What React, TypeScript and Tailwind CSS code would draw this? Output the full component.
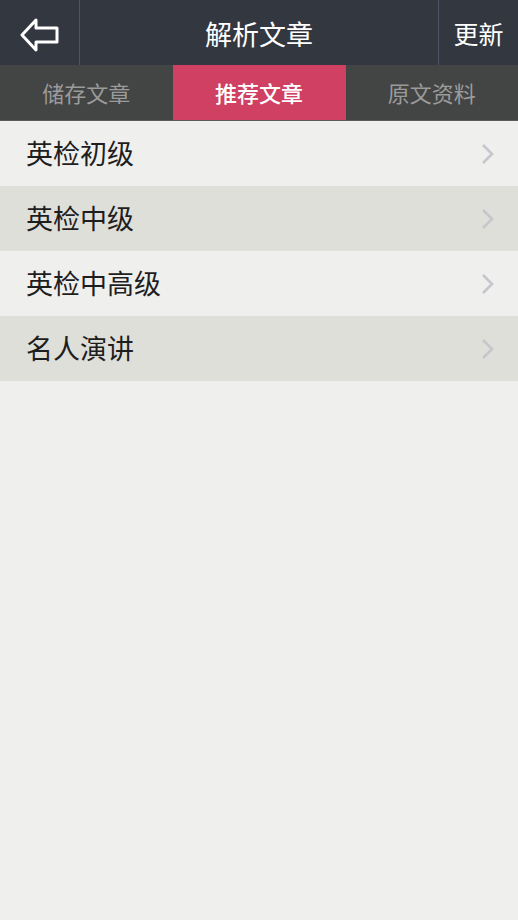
const items = ["英检初级", "英检中级", "英检中高级", "名人演讲"];
const tabs = ["储存文章", "推荐文章", "原文资料"];

function Chevron() {
  return (
    <svg width="16" height="22" viewBox="0 0 16 22" fill="none">
      <path d="M3 2 L12 11 L3 20" stroke="#c6c6cc" strokeWidth="2.6" />
    </svg>
  );
}

export default function App() {
  return (
    <div
      className="flex min-h-[920px] w-[518px] flex-col bg-[#efefed]"
      style={{ fontFamily: '"Noto Sans CJK SC", "Noto Sans", sans-serif' }}
    >
      <div className="flex h-[65px] bg-[#333740]">
        <div className="flex w-[80px] items-center justify-center border-r border-[#4d5566] pt-[4px]">
          <svg width="40" height="34" viewBox="0 0 40 34" fill="none">
            <path
              d="M16 2 L2 17 L16 32 V24 H37 V10 H16 Z"
              stroke="#fff"
              strokeWidth="3"
              strokeLinejoin="round"
            />
          </svg>
        </div>
        <div className="flex flex-1 items-center justify-center pt-[4px] text-[27px] text-white">
          解析文章
        </div>
        <div className="flex w-[80px] items-center justify-center border-l border-[#4d5566] pt-[3px] text-[25px] text-white">
          更新
        </div>
      </div>
      <div className="flex h-[56px] border-b border-[#5a5a5a] bg-[#434444]">
        {tabs.map((t, i) => (
          <div
            key={t}
            className={
              i === 1
                ? "flex w-[173px] items-center justify-center bg-[#d04063] text-[22px] font-medium text-white"
                : "flex flex-1 items-center justify-center text-[22px] text-[#9b9b9b]"
            }
          >
            {t}
          </div>
        ))}
      </div>
      {items.map((it, i) => (
        <div
          key={it}
          className={
            "flex h-[65px] items-center justify-between pl-[26px] pr-[22px] " +
            (i % 2 === 1 ? "bg-[#dfdfda]" : "bg-[#efefed]")
          }
        >
          <span className="text-[27px] text-[#1e1e1e]">{it}</span>
          <Chevron />
        </div>
      ))}
    </div>
  );
}
